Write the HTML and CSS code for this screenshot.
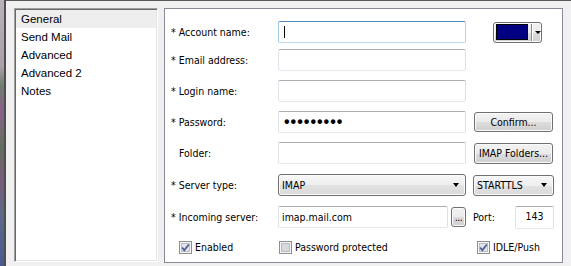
FILE: index.html
```html
<!DOCTYPE html>
<html lang="en">

<head>
    <meta charset="utf-8">
    <title>Account settings</title>
    <link rel="stylesheet" href="styles.css">
</head>

<body>
    <div class="desktop"></div>

    <div class="window">
        <ul class="page-list">
            <li class="active">General</li>
            <li>Send Mail</li>
            <li>Advanced</li>
            <li>Advanced 2</li>
            <li>Notes</li>
        </ul>

        <div class="panel">
            <div class="row">
                <span class="label">* Account name:</span>
                <div class="field focused"><span class="caret"></span></div>
                <div class="color-pick">
                    <span class="swatch"></span>
                    <span class="sep"></span>
                    <span class="arrow"></span>
                </div>
            </div>

            <div class="row close">
                <span class="label">* Email address:</span>
                <div class="field"></div>
            </div>

            <div class="row">
                <span class="label">* Login name:</span>
                <div class="field"></div>
            </div>

            <div class="row">
                <span class="label">* Password:</span>
                <div class="field"><span class="dots">•••••••••</span></div>
                <div class="btn side">Confirm...</div>
            </div>

            <div class="row">
                <span class="label plain">Folder:</span>
                <div class="field"></div>
                <div class="btn side tall">IMAP Folders...</div>
            </div>

            <div class="row loose">
                <span class="label">* Server type:</span>
                <div class="select server-type"><span>IMAP</span><span class="arrow"></span></div>
                <div class="select security"><span>STARTTLS</span><span class="arrow"></span></div>
            </div>

            <div class="row loose">
                <span class="label">* Incoming server:</span>
                <div class="field short">imap.mail.com</div>
                <div class="btn browse">...</div>
                <span class="port-label">Port:</span>
                <div class="field port">143</div>
            </div>

            <div class="row checks">
                <label class="check first">
                    <svg class="box" width="13" height="13" viewBox="0 0 13 13">
                        <rect x="0.5" y="0.5" width="12" height="12" fill="#f6f6f6" stroke="#8e8f8f"/>
                        <rect x="2.5" y="2.5" width="8" height="8" fill="#e2e4e8" stroke="#b9bdc3"/>
                        <path d="M3.2 6.4 5.3 9.3 9.8 3.4" fill="none" stroke="#4a5e96" stroke-width="1.7"/>
                    </svg>
                    Enabled
                </label>
                <label class="check second">
                    <svg class="box" width="13" height="13" viewBox="0 0 13 13">
                        <rect x="0.5" y="0.5" width="12" height="12" fill="#f6f6f6" stroke="#8e8f8f"/>
                        <rect x="2.5" y="2.5" width="8" height="8" fill="#d6d9de" stroke="#b9bdc3"/>
                    </svg>
                    Password protected
                </label>
                <label class="check third">
                    <svg class="box" width="13" height="13" viewBox="0 0 13 13">
                        <rect x="0.5" y="0.5" width="12" height="12" fill="#f6f6f6" stroke="#8e8f8f"/>
                        <rect x="2.5" y="2.5" width="8" height="8" fill="#e2e4e8" stroke="#b9bdc3"/>
                        <path d="M3.2 6.4 5.3 9.3 9.8 3.4" fill="none" stroke="#4a5e96" stroke-width="1.7"/>
                    </svg>
                    IDLE/Push
                </label>
            </div>
        </div>
    </div>
</body>

</html>
```

FILE: styles.css
```css
body {
    margin: 0;
    height: 266px;
    overflow: hidden;
    display: flex;
    background-color: #f0f0f0;
    font-family: "Liberation Sans", Arial, sans-serif;
    font-size: 11px;
    color: #000;
}

/* bit of desktop showing behind the dialog */
.desktop {
    width: 4px;
    flex: none;
    background: linear-gradient(#b9b2ba 0%, #a9a0a9 25%, #6f7d6c 32%, #8a5f8a 42%, #5f6f5c 55%, #7a5a7a 68%, #5d6a88 80%, #4a5890 100%);
}

.window {
    flex: 1;
    display: flex;
    align-items: flex-start;
    gap: 6px;
    padding: 7px 8px 0 8px;
    border-left: 2px solid #4e4e4e;
    border-top: 1px solid #5a5a5a;
}

.page-list {
    width: 144px;
    height: 254px;
    box-sizing: border-box;
    margin: 0;
    padding: 1px;
    list-style: none;
    background-color: #fff;
    border: 1px solid;
    border-color: #a0a0a0 #fff #fff #a0a0a0;
    box-shadow: inset 1px 1px #696969, inset -1px -1px #e3e3e3;

    li {
        height: 18px;
        line-height: 18px;
        padding-left: 5px;
        font-size: 11.5px;
    }

    li.active {
        background-color: #eeeeee;
    }
}

/* the form side uses a tahoma-like face */
.panel {
    width: 399px;
    height: 255px;
    box-sizing: border-box;
    padding: 12px 8px 0 6px;
    background-color: #fff;
    border: 1px solid #898c98;
    font-family: "DejaVu Sans Condensed", "DejaVu Sans", sans-serif;
    font-size: 10.5px;
}

.row {
    display: flex;
    align-items: center;
    height: 22px;
    margin-top: 9px;
}

.row:first-child {
    margin-top: 0;
}

.row.close {
    margin-top: 6px;
}

.row.loose {
    margin-top: 10px;
}

.label {
    width: 107px;
    flex: none;
    white-space: nowrap;
    box-sizing: border-box;
}

.label.plain {
    padding-left: 8px;
}

.field {
    width: 188px;
    height: 22px;
    flex: none;
    box-sizing: border-box;
    display: flex;
    align-items: center;
    padding: 0 3px;
    background-color: #fff;
    border: 1px solid;
    border-color: #abadb3 #dbdfe6 #e3e9ef #e2e3ea;
    border-radius: 2px;
}

.field.focused {
    border-color: #5b8bb8 #b5cfe7 #b7d9ed #a4c9e3;
}

.caret {
    width: 1px;
    height: 12px;
    margin-left: 2px;
    background-color: #000;
}

.dots {
    margin-left: 2px;
    font-family: "Liberation Sans", Arial, sans-serif;
    font-size: 16px;
    font-weight: bold;
    letter-spacing: 1px;
}

.btn, .select, .color-pick {
    box-sizing: border-box;
    border: 1px solid #707070;
    border-radius: 3px;
    background: linear-gradient(#f2f2f2 0%, #ebebeb 50%, #dddddd 51%, #cfcfcf 100%);
    box-shadow: inset 0 0 0 1px #fbfbfb;
}

.btn {
    display: flex;
    align-items: center;
    justify-content: center;
    white-space: nowrap;
}

.btn.side {
    width: 79px;
    height: 20px;
    margin-left: 8px;
}

.btn.tall {
    height: 21px;
}

.btn.browse {
    width: 15px;
    height: 20px;
    margin-left: 3px;
    align-items: flex-end;
    padding-bottom: 3px;
    letter-spacing: -0.5px;
}

.select {
    display: flex;
    align-items: center;
    justify-content: space-between;
    padding: 0 6px 0 3px;
    background: linear-gradient(#f7f7f7 0%, #eeeeee 50%, #e2e2e2 51%, #dadada 100%);
}

.server-type {
    width: 188px;
    height: 22px;
}

.security {
    width: 81px;
    height: 21px;
    margin-left: 7px;
}

.arrow {
    width: 0;
    height: 0;
    border-left: 3.5px solid transparent;
    border-right: 3.5px solid transparent;
    border-top: 4px solid #000;
}

.color-pick {
    width: 49px;
    height: 21px;
    margin-left: 27px;
    display: flex;
    align-items: center;
    padding-left: 2px;

    .swatch {
        width: 33px;
        height: 16px;
        box-sizing: border-box;
        border: 1px solid #000;
        background-color: #000080;
    }

    .sep {
        width: 1px;
        height: 17px;
        margin-left: 3px;
        background-color: #8a8a8a;
        box-shadow: 1px 0 #fff;
    }

    .arrow {
        margin-left: 3px;
        border-left-width: 3px;
        border-right-width: 3px;
        border-top-width: 3px;
    }
}

.field.short {
    width: 170px;
}

.port-label {
    margin-left: 7px;
}

.field.port {
    width: 39px;
    height: 23px;
    margin-left: auto;
    justify-content: center;
    align-items: flex-start;
    padding-top: 3px;
}

.row.checks {
    height: 16px;
    margin-top: 11px;
}

.check {
    display: flex;
    align-items: center;
    gap: 3px;
    box-sizing: border-box;
}

.check.first {
    width: 108px;
    padding-left: 8px;
}

.check.second {
    width: 198px;
}

.box {
    flex: none;
}
```
